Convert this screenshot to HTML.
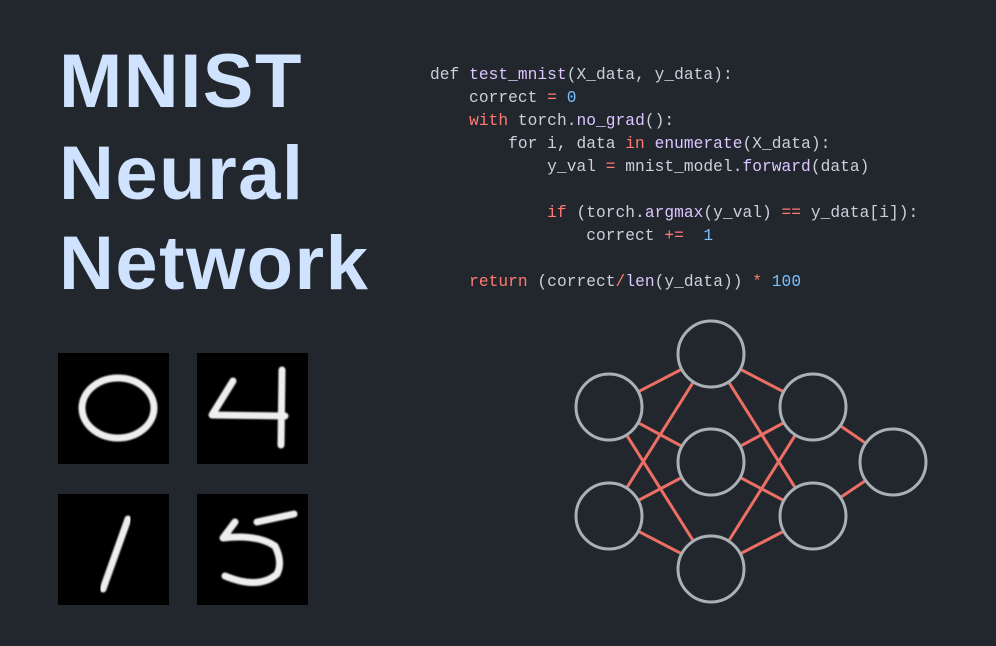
<!DOCTYPE html>
<html><head><meta charset="utf-8"><style>
body{margin:0;width:996px;height:646px;background:#22262d;overflow:hidden;position:relative;font-family:"Liberation Sans",sans-serif}
.t{position:absolute;left:59px;color:#cfe3ff;font-weight:bold;font-size:76px;line-height:1;letter-spacing:1.5px}
pre{position:absolute;left:430px;top:64px;margin:0;font-family:"Liberation Mono",monospace;font-size:16.2px;line-height:23px;color:#c9d1d9;letter-spacing:0.05px}
.k{color:#ff7b72}.f{color:#dcc6ff}.n{color:#79c0ff}
.b{position:absolute;width:111px;height:111px;background:#000}
</style></head><body>
<div class="t" style="top:44px">MNIST</div>
<div class="t" style="top:136px">Neural</div>
<div class="t" style="top:226px">Network</div>
<pre>def <span class="f">test_mnist</span>(X_data, y_data):
    correct <span class="k">=</span> <span class="n">0</span>
    <span class="k">with</span> torch.<span class="f">no_grad</span>():
        for i, data <span class="k">in</span> <span class="f">enumerate</span>(X_data):
            y_val <span class="k">=</span> mnist_model.<span class="f">forward</span>(data)

            <span class="k">if</span> (torch.<span class="f">argmax</span>(y_val) <span class="k">==</span> y_data[i]):
                correct <span class="k">+=</span>  <span class="n">1</span>

    <span class="k">return</span> (correct<span class="k">/</span><span class="f">len</span>(y_data)) <span class="k">*</span> <span class="n">100</span></pre>
<svg class="b" style="left:58px;top:353px" viewBox="0 0 111 111"><defs><filter id="bl"><feGaussianBlur stdDeviation="0.8"/></filter></defs><ellipse cx="60" cy="55" rx="36" ry="30" fill="none" stroke="#eee" stroke-width="7" filter="url(#bl)"/></svg>
<svg class="b" style="left:197px;top:353px" viewBox="0 0 111 111"><path d="M36 28 L15 62 L88 63 M85 17 L84 92" fill="none" stroke="#eee" stroke-width="7" stroke-linecap="round" stroke-linejoin="round" filter="url(#bl)"/></svg>
<svg class="b" style="left:58px;top:494px" viewBox="0 0 111 111"><path d="M70 25 L45 95" fill="none" stroke="#eee" stroke-width="7" stroke-linecap="round" filter="url(#bl)"/></svg>
<svg class="b" style="left:197px;top:494px" viewBox="0 0 111 111"><path d="M60 28 L97 20 M38 28 L26 44 Q60 40 78 52 Q86 68 80 80 Q62 96 28 82" fill="none" stroke="#eee" stroke-width="7" stroke-linecap="round" stroke-linejoin="round" filter="url(#bl)"/></svg>
<svg style="position:absolute;left:0;top:0" width="996" height="646">
<g stroke="#ec6f66" stroke-width="3">
<line x1="609" y1="407" x2="711" y2="354"/><line x1="609" y1="407" x2="711" y2="462"/><line x1="609" y1="407" x2="711" y2="569"/>
<line x1="609" y1="516" x2="711" y2="354"/><line x1="609" y1="516" x2="711" y2="462"/><line x1="609" y1="516" x2="711" y2="569"/>
<line x1="813" y1="407" x2="711" y2="354"/><line x1="813" y1="407" x2="711" y2="462"/><line x1="813" y1="407" x2="711" y2="569"/>
<line x1="813" y1="516" x2="711" y2="354"/><line x1="813" y1="516" x2="711" y2="462"/><line x1="813" y1="516" x2="711" y2="569"/>
<line x1="813" y1="407" x2="893" y2="462"/><line x1="813" y1="516" x2="893" y2="462"/>
</g>
<g fill="#22262d" stroke="#a8b1b6" stroke-width="3">
<circle cx="609" cy="407" r="33"/><circle cx="609" cy="516" r="33"/>
<circle cx="711" cy="354" r="33"/><circle cx="711" cy="462" r="33"/><circle cx="711" cy="569" r="33"/>
<circle cx="813" cy="407" r="33"/><circle cx="813" cy="516" r="33"/><circle cx="893" cy="462" r="33"/>
</g></svg>
</body></html>
